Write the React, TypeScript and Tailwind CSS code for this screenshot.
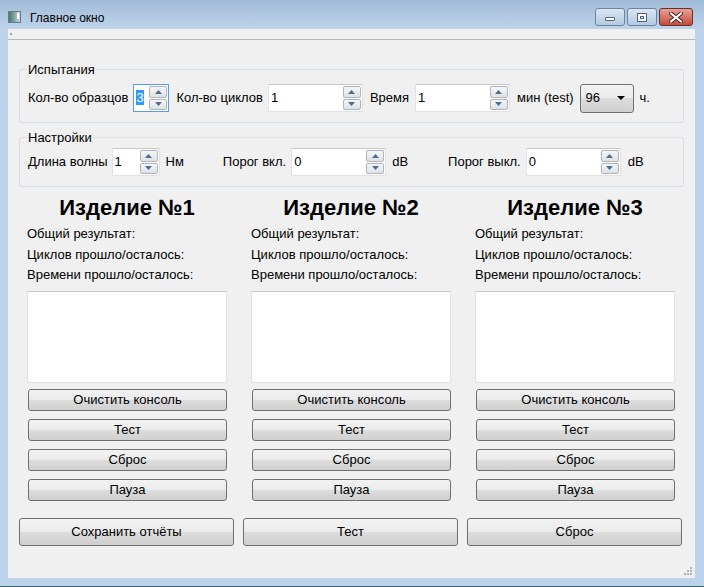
import type { ReactNode } from 'react';

const FONT = { fontFamily: '"Liberation Sans", Arial, sans-serif' };

function Arrow({ up }: { up?: boolean }) {
  return (
    <svg width="7" height="4" viewBox="0 0 7 4" className="block">
      {up ? <path d="M0 4 L3.5 0 L7 4 Z" fill="#4e6d92" /> : <path d="M0 0 L3.5 4 L7 0 Z" fill="#4e6d92" />}
    </svg>
  );
}

function SpinButton({ up }: { up?: boolean }) {
  return (
    <div className="flex-1 flex items-center justify-center border border-[#b0b4bb] rounded-[2px] bg-gradient-to-b from-[#f5f6f7] to-[#dfe2e6]">
      <Arrow up={up} />
    </div>
  );
}

function Spin({ w, value, focused }: { w: string; value: string; focused?: boolean }) {
  return (
    <div className={`${w} h-[28px] flex bg-white border ${focused ? 'border-[#569de5]' : 'border-[#dfe3e8] border-t-[#c5c9cf]'}`}>
      <div className="flex-1 flex items-start pl-[2px] pt-[5px] text-[13px] leading-[15px]">
        {focused ? <span className="bg-[#3399ff] text-white">{value}</span> : value}
      </div>
      <div className="w-[19px] flex flex-col gap-[1px] py-[1px] pr-[1px]">
        <SpinButton up />
        <SpinButton />
      </div>
    </div>
  );
}

function Btn({ children, h = 'h-[22px]' }: { children: ReactNode; h?: string }) {
  return (
    <div className={`${h} flex items-center justify-center border border-[#707070] rounded-[3px] bg-[linear-gradient(#f2f2f2_0%,#ebebeb_50%,#dddddd_50%,#cfcfcf_100%)] text-[13px] text-black`}>
      {children}
    </div>
  );
}

function Group({ title, children, className }: { title: string; children: ReactNode; className?: string }) {
  return (
    <fieldset className={`border border-[#d5dfe5] rounded-[3px] px-[8px] ${className ?? ''}`}>
      <legend className="px-[1px] text-[13px] leading-[15px] -ml-[1px]">{title}</legend>
      {children}
    </fieldset>
  );
}

function Product({ n }: { n: number }) {
  return (
    <div className="w-[200px] flex flex-col">
      <div className="text-center font-bold text-[22px] leading-[28px] -mt-[1px]">Изделие №{n}</div>
      <div className="flex flex-col text-[13px] leading-[20.5px] mt-[2px]">
        <div>Общий результат:</div>
        <div>Циклов прошло/осталось:</div>
        <div>Времени прошло/осталось:</div>
      </div>
      <div className="h-[92px] mt-[5px] bg-white border border-[#dfe3e8] border-t-[#c5c9cf]" />
      <div className="flex flex-col gap-[8px] mt-[6px] pl-[1px]">
        <Btn>Очистить консоль</Btn>
        <Btn>Тест</Btn>
        <Btn>Сброс</Btn>
        <Btn>Пауза</Btn>
      </div>
    </div>
  );
}

export default function App() {
  return (
    <div style={FONT} className="w-[704px] h-[587px] flex flex-col bg-[#bcd3eb] text-black border-b border-[#3c6a6a]">
      <div className="h-[29px] flex items-start bg-gradient-to-b from-[#a2bcd8] to-[#bdd3ea]">
        <div className="mt-[11px] ml-[8px] w-[13px] h-[12px] border border-[#6b7b8c] bg-gradient-to-r from-[#3f7a6a] to-[#c9d9e6] relative">
          <div className="absolute right-[1px] top-[1px] w-[2px] h-[6px] bg-white" />
        </div>
        <div className="ml-[9px] mt-[11px] text-[12px] leading-[14px] text-black">Главное окно</div>
        <div className="ml-auto mt-[8px] mr-[11px] flex gap-[2px]">
          <div className="w-[30px] h-[18px] rounded-[3px] border border-[#6d83a0] bg-gradient-to-b from-[#dbe6f3] to-[#b3c9e2] flex items-end justify-center pb-[4px]">
            <div className="w-[10px] h-[4px] bg-white border border-[#4f6480] rounded-[1px]" />
          </div>
          <div className="w-[30px] h-[18px] rounded-[3px] border border-[#6d83a0] bg-gradient-to-b from-[#dbe6f3] to-[#b3c9e2] flex items-center justify-center">
            <div className="w-[10px] h-[9px] bg-white border border-[#4f6480] flex items-center justify-center">
              <div className="w-[4px] h-[3px] border border-[#4f6480] bg-[#dbe6f3]" />
            </div>
          </div>
          <div className="w-[34px] h-[18px] rounded-[3px] border border-[#6b2f2a] bg-gradient-to-b from-[#e5a196] to-[#c4483a] flex items-center justify-center">
            <svg width="14" height="11" viewBox="0 0 14 11">
              <path d="M2 1.5 L12 9.5 M12 1.5 L2 9.5" stroke="#4a1f1b" strokeWidth="4" strokeLinecap="square" />
              <path d="M2 1.5 L12 9.5 M12 1.5 L2 9.5" stroke="#ffffff" strokeWidth="2" strokeLinecap="square" />
            </svg>
          </div>
        </div>
      </div>

      <div className="flex-1 ml-[8px] mr-[9px] mb-[8px] bg-[#f0f0f0] flex flex-col relative">
        <div className="h-[11px] border-b border-[#b9b9b9] flex items-center pl-[2px]">
          <div className="w-[2px] h-[2px] bg-[#a0a0a0]" />
        </div>

        <div className="px-[11px] flex flex-col">
          <Group title="Испытания" className="mt-[22px] pb-[10px] pt-[7px]">
            <div className="flex items-center text-[13px] h-[28px]">
              <span>Кол-во образцов</span>
              <div className="ml-[5px]"><Spin w="w-[36px]" value="3" focused /></div>
              <span className="ml-[7px]">Кол-во циклов</span>
              <div className="ml-[5px]"><Spin w="w-[95px]" value="1" /></div>
              <span className="ml-[7px]">Время</span>
              <div className="ml-[6px]"><Spin w="w-[95px]" value="1" /></div>
              <span className="ml-[7px]">мин (test)</span>
              <div className="ml-[6px] w-[54px] h-[29px] flex items-center border border-[#707070] rounded-[3px] bg-[linear-gradient(#f2f2f2_0%,#ebebeb_50%,#dddddd_50%,#cfcfcf_100%)]">
                <span className="ml-[5px]">96</span>
                <svg width="8" height="4" viewBox="0 0 8 4" className="ml-auto mr-[8px]">
                  <path d="M0 0 L8 0 L4 4 Z" fill="#000" />
                </svg>
              </div>
              <span className="ml-[6px]">ч.</span>
            </div>
          </Group>

          <Group title="Настройки" className="mt-[7px] pb-[10px] pt-[3px]">
            <div className="flex items-center text-[13px] h-[28px]">
              <span>Длина волны</span>
              <div className="ml-[4px]"><Spin w="w-[48px]" value="1" /></div>
              <span className="ml-[6px]">Нм</span>
              <span className="ml-[39px]">Порог вкл.</span>
              <div className="ml-[5px]"><Spin w="w-[95px]" value="0" /></div>
              <span className="ml-[6px]">dB</span>
              <span className="ml-[40px]">Порог выкл.</span>
              <div className="ml-[5px]"><Spin w="w-[95px]" value="0" /></div>
              <span className="ml-[7px]">dB</span>
            </div>
          </Group>

          <div className="flex gap-[24px] pl-[8px] mt-[8px]">
            <Product n={1} />
            <Product n={2} />
            <Product n={3} />
          </div>

          <div className="grid grid-cols-3 gap-[9px] mt-[17px] mr-[2px]">
            <Btn h="h-[28px]">Сохранить отчёты</Btn>
            <Btn h="h-[28px]">Тест</Btn>
            <Btn h="h-[28px]">Сброс</Btn>
          </div>
        </div>

        <div className="absolute right-[3px] bottom-[3px] grid grid-cols-3 gap-[1px]">
          <div className="w-[2px] h-[2px]" />
          <div className="w-[2px] h-[2px]" />
          <div className="w-[2px] h-[2px] bg-[#b0b0b0]" />
          <div className="w-[2px] h-[2px]" />
          <div className="w-[2px] h-[2px] bg-[#b0b0b0]" />
          <div className="w-[2px] h-[2px] bg-[#b0b0b0]" />
          <div className="w-[2px] h-[2px] bg-[#b0b0b0]" />
          <div className="w-[2px] h-[2px] bg-[#b0b0b0]" />
          <div className="w-[2px] h-[2px] bg-[#b0b0b0]" />
        </div>
      </div>
    </div>
  );
}
